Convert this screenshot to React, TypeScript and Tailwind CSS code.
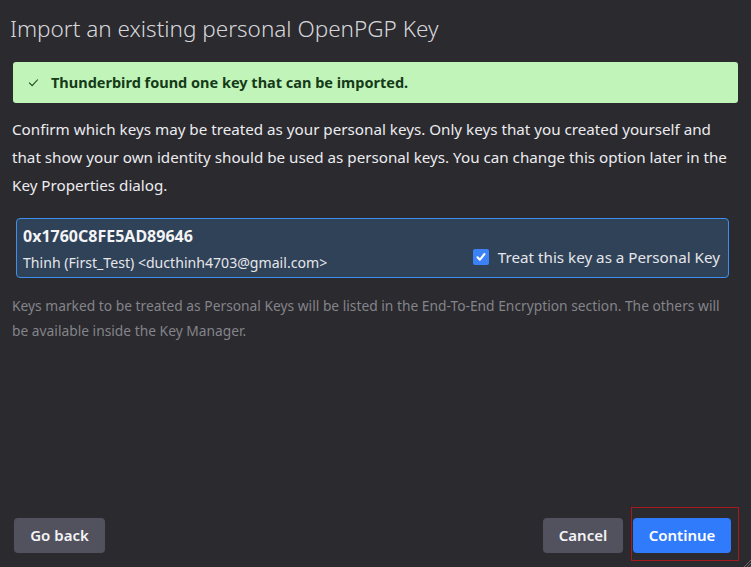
import React from "react";

function CheckMark({ className }: { className?: string }) {
  return (
    <svg className={className} viewBox="0 0 12 12" fill="none" stroke="currentColor">
      <path d="M1.5 6.5l3 3L10.5 3" strokeWidth={1.1} strokeLinecap="round" strokeLinejoin="round" />
    </svg>
  );
}

export default function App() {
  return (
    <div
      className="relative h-screen w-full overflow-hidden bg-[#2a2a2f] text-[#ececf0] flex flex-col"
      style={{ fontFamily: '"Noto Sans", "Open Sans", sans-serif' }}
    >
      {/* Заголовок */}
      <h1 className="px-[10px] pt-[14px] text-[22.5px] font-light leading-[30px] text-[#d6d6da]">
        Import an existing personal OpenPGP Key
      </h1>

      {/* Уведомление */}
      <div className="mx-[13px] mt-[18px] h-[41px] rounded-[3px] bg-[#c0f4b8] flex items-center pl-[15px] gap-[12px] text-[#153a18]">
        <CheckMark className="w-[11px] h-[11px]" />
        <span className="text-[14.5px] font-bold">Thunderbird found one key that can be imported.</span>
      </div>

      <p className="px-[12px] mt-[12px] text-[15.2px] leading-[28px] text-[#ececf0]">
        Confirm which keys may be treated as your personal keys. Only keys that you created yourself and
        that show your own identity should be used as personal keys. You can change this option later in the
        Key Properties dialog.
      </p>

      {/* Ключ */}
      <div className="ml-[16px] mr-[22px] mt-[19px] h-[60px] rounded-[4px] border border-[#3d8ff0] bg-[#2f4258] flex items-center justify-between pl-[6px] pr-[8px]">
        <div className="flex flex-col pt-[2px]">
          <span className="text-[16px] font-bold leading-[20px] text-[#f4f4f6]">0x1760C8FE5AD89646</span>
          <span className="text-[14.1px] leading-[20px] mt-[7px] text-[#e6e6ea]">
            Thinh (First_Test) &lt;ducthinh4703@gmail.com&gt;
          </span>
        </div>
        <label className="flex items-center gap-[9px] mt-[18px]">
          <span className="w-[16px] h-[16px] rounded-[2px] bg-[#3b82f6] flex items-center justify-center text-white">
            <svg viewBox="0 0 12 12" className="w-[12px] h-[12px]" fill="none" stroke="currentColor">
              <path d="M2.5 6.3l2.3 2.5L9.5 3" strokeWidth={2} strokeLinecap="round" strokeLinejoin="round" />
            </svg>
          </span>
          <span className="text-[15.2px] text-[#e6e6ea]">Treat this key as a Personal Key</span>
        </label>
      </div>

      <p className="px-[12px] mt-[15px] text-[13.8px] leading-[25px] text-[#84848a]">
        Keys marked to be treated as Personal Keys will be listed in the End-To-End Encryption section. The others will
        be available inside the Key Manager.
      </p>

      <div className="flex-1" />

      {/* Кнопки */}
      <div className="flex items-center justify-between pl-[14px] pr-[20px] pb-[14px]">
        <button className="h-[35px] w-[91px] rounded-[4px] bg-[#52525e] text-[15px] font-semibold text-[#f4f4f6]">
          Go back
        </button>
        <div className="flex gap-[10px]">
          <button className="h-[35px] w-[80px] rounded-[4px] bg-[#52525e] text-[15px] font-semibold text-[#f4f4f6]">
            Cancel
          </button>
          <div className="relative">
            <button className="h-[35px] w-[98px] rounded-[4px] bg-[#2f7bfb] text-[15px] font-semibold text-white">
              Continue
            </button>
            <div className="absolute left-[-2px] top-[-11px] w-[108px] h-[54px] border-[1.5px] border-[#a8191d] pointer-events-none" />
          </div>
        </div>
      </div>

      {/* Ручка изменения размера */}
      <svg className="absolute right-0 bottom-0 w-[8px] h-[8px]" viewBox="0 0 8 8" stroke="#6a6a70" strokeWidth={1}>
        <path d="M8 1L1 8M8 4L4 8M8 7L7 8" />
      </svg>
    </div>
  );
}
